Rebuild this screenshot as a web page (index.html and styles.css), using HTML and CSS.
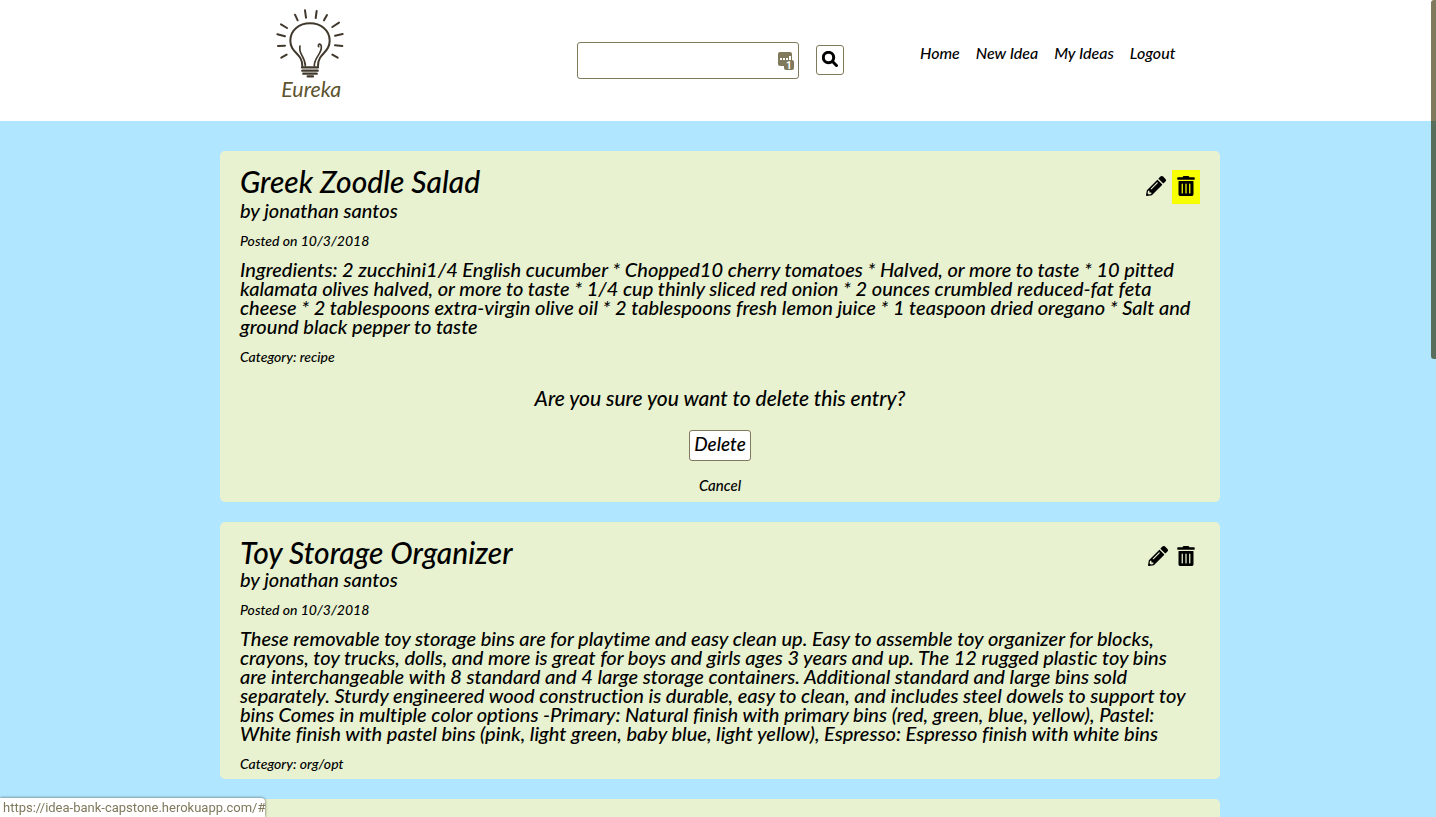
FILE: index.html
```html
<!DOCTYPE html>
<html lang="en">
<head>
<meta charset="utf-8">
<title>Eureka</title>
<link rel="stylesheet" href="styles.css">
</head>
<body>
<svg class="defs" aria-hidden="true">
  <symbol id="pencil" viewBox="0 0 512 512"><path fill-rule="evenodd" d="M498 142l-46 46c-5 5-13 5-17 0L324 77c-5-5-5-12 0-17l46-46c19-19 49-19 68 0l60 60c19 19 19 49 0 68zM284 100L22 362 0 484c-3 16 12 31 28 28l122-21 262-262c5-5 5-13 0-17L301 100c-4-5-12-5-17 0zM124 340c-5-6-5-14 0-20l154-154c6-5 14-5 20 0s5 14 0 20L144 340c-6 5-14 5-20 0zm-36 84h48v36l-64 12-32-32 12-64h36v48z"/></symbol>
  <symbol id="trash" viewBox="0 0 448 512"><path fill-rule="evenodd" d="M0 84V56c0-13 11-24 24-24h112l9-19c4-8 13-13 22-13h114c9 0 18 5 22 13l9 19h112c13 0 24 11 24 24v28c0 7-5 12-12 12H12c-7 0-12-5-12-12zm416 56v324c0 27-21 48-48 48H80c-27 0-48-21-48-48V140c0-7 5-12 12-12h360c7 0 12 5 12 12zM112 208v224c0 9 7 16 16 16s16-7 16-16V208c0-9-7-16-16-16s-16 7-16 16zm96 0v224c0 9 7 16 16 16s16-7 16-16V208c0-9-7-16-16-16s-16 7-16 16zm96 0v224c0 9 7 16 16 16s16-7 16-16V208c0-9-7-16-16-16s-16 7-16 16z"/></symbol>
</svg>
<header class="site-header">
  <div class="header-inner">
    <a class="logo" href="#" aria-label="Eureka home">
      <svg viewBox="0 0 300 330" width="100" height="110">
        <g class="logo-lines">
          <path d="M127 198C127 158 91 160 91 122C91 90 118 70 150 70S209 90 209 122C209 160 174 158 174 198"/>
          <path class="thin" d="M136 198C136 170 114 162 120 138M163 198C162 172 186 162 184 140C183 128 172 132 176 140"/>
          <path class="ray" d="M135 31l3 22M170 33l-3 21M105 44l8 17M201 45l-9 16M63 73l18 11M237 68l-20 13M52 103l23 6M248 102l-23 5M54 138l21-1M247 138l-22-2M64 173l16-9M233 173l-16-9"/>
          <path class="screw" d="M126 202h48M127 212h46M130 221h40M143 229h16"/>
        </g>
        <text class="logo-text" x="64" y="292">Eureka</text>
      </svg>
    </a>
    <form class="search">
      <div class="search-box">
        <input class="search-input" type="text" aria-label="Search ideas">
        <svg class="field-badge" viewBox="0 0 17 18" width="17" height="18" aria-hidden="true"><rect width="14" height="14" rx="2"/><path class="dots" d="M2 7h2M5 7h2M8 7h2M12 4v4"/><rect x="6" y="8" width="10" height="10" rx="2"/><text x="8" y="17">1</text></svg>
      </div>
      <button class="search-button" type="button" aria-label="Search"><svg viewBox="0 0 16 16" width="16" height="16"><circle cx="6.500" cy="6.500" r="5.200"/><path d="M10 10l5.500 5.500"/></svg></button>
    </form>
    <nav class="nav"><a href="#">Home</a><a href="#">New Idea</a><a href="#">My Ideas</a><a href="#">Logout</a></nav>
  </div>
</header>
<main class="ideas">
  <article class="card">
    <div class="card-head">
      <div><h2 class="title title-active">Greek Zoodle Salad</h2><p class="author">by jonathan santos</p></div>
      <div class="actions actions-active">
        <button class="icon-button" type="button" aria-label="Edit"><svg><use href="#pencil"/></svg></button>
        <button class="icon-button selected" type="button" aria-label="Delete entry"><svg><use href="#trash"/></svg></button>
      </div>
    </div>
    <p class="meta">Posted on 10/3/2018</p>
    <p class="content">Ingredients: 2 zucchini1/4 English cucumber * Chopped10 cherry tomatoes * Halved, or more to taste * 10 pitted kalamata olives halved, or more to taste * 1/4 cup thinly sliced red onion * 2 ounces crumbled reduced-fat feta cheese * 2 tablespoons extra-virgin olive oil * 2 tablespoons fresh lemon juice * 1 teaspoon dried oregano * Salt and ground black pepper to taste</p>
    <p class="meta">Category: recipe</p>
    <div class="confirm">
      <p class="question">Are you sure you want to delete this entry?</p>
      <button class="delete-button" type="button">Delete</button>
      <a class="cancel" href="#">Cancel</a>
    </div>
  </article>
  <article class="card">
    <div class="card-head">
      <div><h2 class="title">Toy Storage Organizer</h2><p class="author">by jonathan santos</p></div>
      <div class="actions">
        <button class="icon-button" type="button" aria-label="Edit"><svg><use href="#pencil"/></svg></button>
        <button class="icon-button" type="button" aria-label="Delete entry"><svg><use href="#trash"/></svg></button>
      </div>
    </div>
    <p class="meta">Posted on 10/3/2018</p>
    <p class="content">These removable toy storage bins are for playtime and easy clean up. Easy to assemble toy organizer for blocks, crayons, toy trucks, dolls, and more is great for boys and girls ages 3 years and up. The 12 rugged plastic toy bins are interchangeable with 8 standard and 4 large storage containers. Additional standard and large bins sold separately. Sturdy engineered wood construction is durable, easy to clean, and includes steel dowels to support toy bins Comes in multiple color options -Primary: Natural finish with primary bins (red, green, blue, yellow), Pastel: White finish with pastel bins (pink, light green, baby blue, light yellow), Espresso: Espresso finish with white bins</p>
    <p class="meta">Category: org/opt</p>
  </article>
  <article class="card card-next"></article>
</main>
<div class="status">https://idea-bank-capstone.herokuapp.com/#</div>
<div class="scroll-thumb"></div>
</body>
</html>
```
FILE: styles.css
```css
* { box-sizing: border-box; }
body { margin: 0; min-height: 100vh; display: flex; flex-direction: column; background: #b0e6ff; color: #000; font: italic 500 20px/19px Lato, sans-serif; font-variant-ligatures: none; }
p, h2 { margin: 0; }
a { color: inherit; text-decoration: none; }
button { font: inherit; color: inherit; padding: 0; cursor: pointer; }
.defs { position: absolute; width: 0; height: 0; }

.site-header { min-height: 121px; background: #fff; padding-left: 4px; }
.header-inner { max-width: 1000px; margin: 0 auto; display: flex; align-items: flex-start; }
.logo { margin-left: 40px; }
.logo svg { display: block; }
.logo-lines { fill: none; stroke: #40382c; stroke-width: 6; stroke-linecap: round; }
.logo-lines .thin { stroke-width: 5; }
.logo-lines .screw { stroke-width: 7; }
.logo-text { font: italic 400 64px Lato, sans-serif; fill: #5d542f; }

.search { display: flex; align-items: flex-start; gap: 17px; margin: 42px 0 0 217px; }
.search-box { position: relative; }
.search-input { display: block; width: 222px; height: 37px; border: 1px solid #80795c; border-radius: 3px; background: #fff; padding: 0 28px 0 6px; font: inherit; }
.field-badge { position: absolute; right: 4px; top: 10px; fill: #80795c; }
.field-badge .dots { stroke: #fff; stroke-width: 2; }
.field-badge text { font: 700 10px Roboto, sans-serif; fill: #fff; }
.search-button { display: grid; place-items: center; width: 28px; height: 30px; margin-top: 3px; padding-bottom: 2px; background: #fff; border: 1px solid #80795c; border-radius: 3px; }
.search-button svg { fill: none; stroke: #000; stroke-width: 3; }
.nav { display: flex; gap: 16px; margin: 43px 0 0 76px; font-size: 16px; white-space: nowrap; }

.ideas { flex: 1; width: 100%; max-width: 1004px; margin: 30px auto 0; padding-left: 4px; display: grid; grid-template-rows: auto auto 1fr; gap: 20px; }
.card { background: #e8f2d0; border-radius: 5px; padding: 15px 20px 8px; }
.card-head { display: flex; justify-content: space-between; margin-bottom: 14px; }
.title { font-size: 30px; line-height: 30px; font-weight: 500; margin-bottom: 3px; }
.title-active { margin-bottom: 5px; }
.actions { display: flex; align-items: flex-start; padding-top: 4px; }
.icon-button { display: grid; place-items: center; width: 28px; height: 30px; border: 0; background: transparent; }
.icon-button svg { width: 20px; height: 20px; }
.actions-active { gap: 2px; }
.actions-active .icon-button { height: 34px; padding-bottom: 2px; }
.selected { background: #f8ff00; }
.meta { font-size: 14px; line-height: 14px; }
.content { margin: 12px 0 14px; padding-right: 6px; }
.confirm { display: flex; flex-direction: column; align-items: center; padding: 24px 0 1px; }
.question { font-size: 21px; }
.delete-button { margin: 23px 0 16px; width: 62px; height: 31px; background: #fff; border: 1px solid #80795c; border-radius: 3px; padding-bottom: 4px; font-size: 19px; }
.cancel { font-size: 15px; line-height: 16px; }
.card-next { padding: 0; border-radius: 5px 5px 0 0; }

.status { position: fixed; left: 0; bottom: 0; height: 19px; padding: 0 0 0 3px; background: #fff; border-top-right-radius: 4px; box-shadow: 0 0 3px #555; color: #80795c; font: 13px/19px Roboto, sans-serif; }
.scroll-thumb { position: fixed; right: 0; top: 0; width: 5px; height: 359px; background: #80795c; border-radius: 3px 0 0 3px; mix-blend-mode: multiply; }
```
